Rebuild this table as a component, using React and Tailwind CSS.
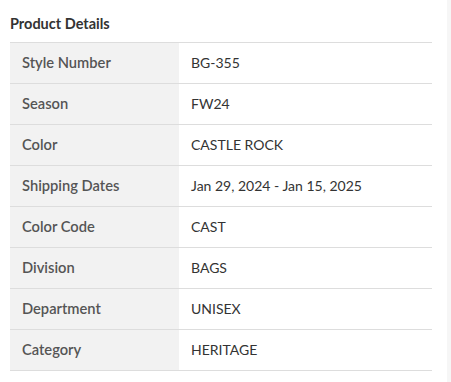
const rows = [
  ['Style Number', 'BG-355'],
  ['Season', 'FW24'],
  ['Color', 'CASTLE ROCK'],
  ['Shipping Dates', 'Jan 29, 2024 - Jan 15, 2025'],
  ['Color Code', 'CAST'],
  ['Division', 'BAGS'],
  ['Department', 'UNISEX'],
  ['Category', 'HERITAGE'],
];

export default function App() {
  return (
    <div className="flex min-h-[382px] bg-white font-['Lato',sans-serif]">
      <div className="w-[447px] pl-[10px] pr-[15px] pt-[15px]">
        <h2 className="text-[14.5px] leading-[18px] font-bold text-[#333] mb-[9px]">Product Details</h2>
        <table className="w-full border-collapse text-[14px]">
          <tbody>
            {rows.map(([label, value]) => (
              <tr key={label} className="border-t border-b border-[#dddddd]">
                <td className="w-[169px] h-[41px] bg-[#f2f2f2] px-[12px] pb-[2px] text-[14.7px] font-semibold text-[#555]">{label}</td>
                <td className="h-[41px] px-[12px] pb-[2px] text-[#333]">{value}</td>
              </tr>
            ))}
          </tbody>
        </table>
      </div>
      <div className="w-[4px] bg-[#f6f6f6]" />
    </div>
  );
}
